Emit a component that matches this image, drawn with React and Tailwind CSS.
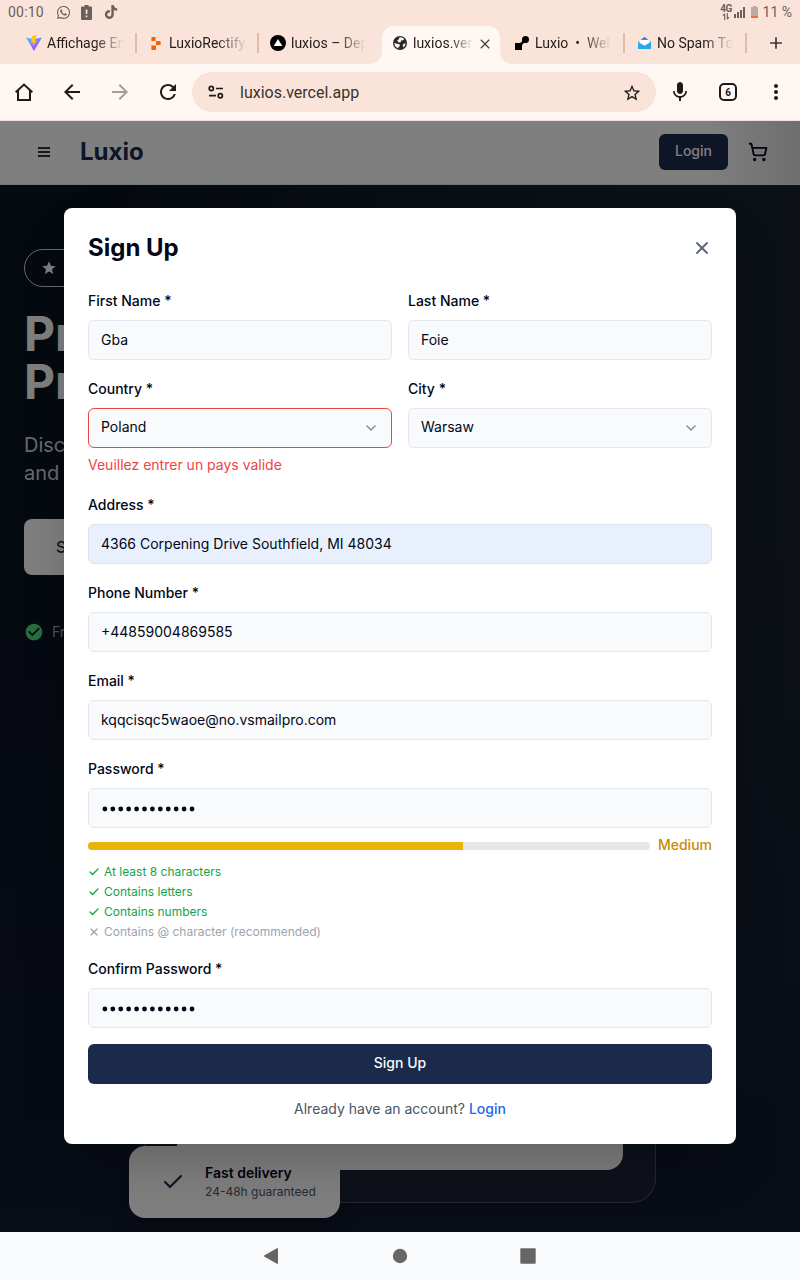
import { Check, ChevronDown, ShoppingCart, X } from "lucide-react";
import { MdAdd, MdArrowBack, MdArrowForward, MdClose, MdMic, MdMoreVert, MdRefresh, MdStar, MdStarBorder, MdCheckCircle } from "react-icons/md";
import { FaTiktok, FaWhatsapp } from "react-icons/fa";

function StatusBar() {
  return (
    <div className="flex h-6 items-center justify-between pl-2 pr-2 text-[14px] text-[#6b605b]">
      <div className="flex items-center">
        <span className="w-[48px] tracking-[0.2px]">00:10</span>
        <FaWhatsapp className="size-[15px]" />
        <svg className="ml-[10px] h-[15px] w-[11px]" viewBox="0 0 11 15" fill="currentColor" fillRule="evenodd">
          <path d="M3.500 0h4v1.500H10q1 0 1 1V14q0 1-1 1H1q-1 0-1-1V2.500q0-1 1-1h2.500zM4.700 4.500v4.500h1.700V4.500zM4.700 10.500v1.700h1.700v-1.700z" />
        </svg>
        <FaTiktok className="ml-[12px] size-[14px]" />
      </div>
      <div className="flex items-center">
        <div className="flex w-[13px] flex-col items-center text-[10px] font-bold leading-[9px]">
          <span className="tracking-[-0.4px]">4G</span>
          <svg className="h-[7px] w-[8px]" viewBox="0 0 8 8" fill="none" stroke="currentColor" strokeWidth="1.300">
            <path d="M2.500 8V1M.5 3l2-2M5.500 0v7M7.500 5l-2 2" />
          </svg>
        </div>
        <svg className="ml-px h-[11px] w-[11px]" viewBox="0 0 11 11" fill="currentColor">
          <path d="M0 7h2v4H0zM3 5h2v6H3zM6 3h2v8H6zM9 0h2v11H9z" />
        </svg>
        <svg className="ml-[6px] h-[13px] w-[7px]" viewBox="0 0 7 13">
          <path fill="#bfaaa1" d="M2 0h3v1h2v9H0V1h2z" />
          <path fill="#f26b4e" d="M0 10h7v2H0z" />
        </svg>
        <span className="ml-[5px]">11 %</span>
      </div>
    </div>
  );
}

function ViteIcon() {
  return (
    <svg viewBox="0 0 16 16" className="size-4">
      <defs>
        <linearGradient id="vite" x1="0" y1="0" x2="0.7" y2="1">
          <stop stopColor="#41d1ff" />
          <stop offset="1" stopColor="#bd34fe" />
        </linearGradient>
      </defs>
      <path fill="url(#vite)" d="M0 2.500 8 16 16 2.500 8 4z" />
      <path fill="#ffc61a" d="M11 0 6 1.200 5.400 8l2 -.4L7 11l4-5.500-2.200.3z" />
    </svg>
  );
}

function GlobeIcon() {
  return (
    <svg viewBox="0 0 14 14" className="size-[14px]">
      <circle cx="7" cy="7" r="7" fill="#28292b" />
      <path fill="#fff7f4" d="M6.500 1.300q3-.4 4.800 1.600L9.800 4.400 8.200 4.200 7.600 6.200 5.600 6.400 4.200 4.600 5.900 3.300zM1.400 6.800 3.600 7.800 6.600 8.200 6.800 10.200 5.400 10.900 5.600 12.500Q1.300 11.200 1.400 6.800M12.600 7.600q-.4 2.400-2.200 3.800L9.700 9l1.300-1.500z" />
    </svg>
  );
}

function Tab({ icon, title, className, textClass }) {
  return (
    <div className={"flex h-[35px] items-center " + className}>
      <span className="mb-px flex w-[16px] shrink-0 justify-center">{icon}</span>
      <span className={"ml-[5px] overflow-hidden whitespace-pre text-[14px] text-[#221b18] [mask-image:linear-gradient(to_right,black_62%,transparent)] " + textClass}>{title}</span>
    </div>
  );
}

function Separator() {
  return <div className="mt-[7px] h-[20px] w-[2px] shrink-0 bg-[#dfbba9]" />;
}

function TabStrip() {
  return (
    <div className="flex h-10 pt-[2px]">
      <Tab className="w-[135px] pl-[26px]" textClass="w-[77px]" icon={<ViteIcon />} title="Affichage Entreprise" />
      <Separator />
      <Tab
        className="w-[120px] pl-[11px]"
        textClass="w-[78px]"
        title="LuxioRectify"
        icon={
          <svg viewBox="0 0 10 14" className="h-[13px] w-[10px]" fill="#f26207">
            <path d="M1 0h3.500v4.300H0V1q0-1 1-1M5 4.300h4q1 0 1 1v2.400q0 1-1 1H5zM0 9.200h5V13q0 1-1 1H1q-1 0-1-1z" />
          </svg>
        }
      />
      <Separator />
      <Tab
        className="w-[123px] pl-[11px]"
        textClass="w-[75px]"
        title="luxios – Deploy"
        icon={
          <svg viewBox="0 0 16 16" className="size-4">
            <circle cx="8" cy="8" r="8" />
            <path fill="#fff" d="m8 4 4.300 7H3.700z" />
          </svg>
        }
      />
      <div className="relative flex w-[118px] rounded-t-xl bg-[#fff7f4]">
        <div className="absolute bottom-0 -left-3 size-3 bg-[radial-gradient(circle_at_0_0,#fae4d9_11.5px,#fff7f4_12px)]" />
        <div className="absolute bottom-0 -right-3 size-3 bg-[radial-gradient(circle_at_100%_0,#fae4d9_11.5px,#fff7f4_12px)]" />
        <Tab className="pl-[10px]" textClass="w-[60px]" title="luxios.vercel.app" icon={<GlobeIcon />} />
        <div className="flex h-[35px] items-center pl-[4px]">
          <MdClose className="size-4 text-[#4c4441]" />
        </div>
      </div>
      <Tab
        className="w-[123px] pl-[14px]"
        textClass="w-[76px]"
        title="Luxio  •  Website"
        icon={
          <svg viewBox="0 0 14 14" className="size-[14px]">
            <circle cx="10.5" cy="3.5" r="3.5" />
            <path d="M0 7h4q3 0 4-4l4 3q-5 1-5 4v4H0z" />
          </svg>
        }
      />
      <Separator />
      <Tab
        className="w-[120px] pl-[11px]"
        textClass="w-[76px]"
        title="No Spam Today"
        icon={
          <svg viewBox="0 0 14 14" className="size-[13px]">
            <path fill="#1675d2" d="m0 5 7-5 7 5z" />
            <path fill="#fff" d="M1.500 3h11v6h-11z" />
            <path fill="#28a8ea" d="m0 5 7 4.500L14 5v8H0z" />
          </svg>
        }
      />
      <Separator />
      <div className="flex h-[34px] flex-1 items-center justify-center pl-1">
        <MdAdd className="size-[20px] text-[#3d3532]" />
      </div>
    </div>
  );
}

function Toolbar() {
  return (
    <div className="flex h-[57px] items-center border-b border-[#f6e0d7] bg-[#fff7f4] text-[#201a17]">
      <div className="flex w-12 justify-center">
        <svg className="size-6" viewBox="0 0 24 24" fill="none" stroke="currentColor" strokeWidth="2">
          <path d="M3.700 12.300 12 4.500l8.300 7.800M6 10.500V20h12v-9.500" />
        </svg>
      </div>
      <div className="flex w-12 justify-center"><MdArrowBack className="size-6" /></div>
      <div className="flex w-12 justify-center"><MdArrowForward className="size-6 text-[#a39c99]" /></div>
      <div className="flex w-12 justify-center"><MdRefresh className="size-6" /></div>
      <div className="flex h-10 w-[464px] items-center rounded-full bg-[#fae4d9] px-3">
        <svg className="size-6" viewBox="0 0 24 24" fill="none" stroke="currentColor" strokeWidth="1.700">
          <circle cx="7.300" cy="8.500" r="2.100" />
          <circle cx="16.300" cy="15.700" r="2.100" />
          <path d="M12 8.500h7M5 15.700h7" />
        </svg>
        <span className="ml-3 flex-1 pt-[2px] text-[16px] text-[#3b322e]">luxios.vercel.app</span>
        <div className="flex w-6 justify-center pt-[2px]"><MdStarBorder className="size-5" /></div>
      </div>
      <div className="flex w-12 justify-center"><MdMic className="size-6" /></div>
      <div className="flex w-12 justify-center">
        <div className="flex size-[18px] items-center justify-center rounded-[5px] border-2 border-current text-[10px] font-bold">6</div>
      </div>
      <div className="flex w-12 justify-center"><MdMoreVert className="size-6" /></div>
    </div>
  );
}

function SiteHeader() {
  return (
    <header className="flex h-16 shrink-0 items-center border-b border-[#e2e8f0] bg-linear-to-r from-white from-88% to-[#dedede] px-8 pb-px">
      <svg className="ml-[6px] h-[10px] w-[12px] text-[#33353f]" viewBox="0 0 12 10" stroke="currentColor" strokeWidth="2">
        <path d="M0 1h12M0 5h12M0 9h12" />
      </svg>
      <span className="ml-[30px] flex-1 text-[24px] font-bold leading-8 text-[#1c2a4e]">Luxio</span>
      <div className="flex h-9 w-[69px] items-center justify-center rounded-md bg-[#1c2a4e] pb-[3px] text-[14px] font-medium text-white">Login</div>
      <ShoppingCart className="ml-5 size-5 text-[#020817]" strokeWidth={2.2} />
    </header>
  );
}

function Hero() {
  return (
    <section className="relative flex flex-1 flex-col overflow-hidden bg-linear-to-r from-[#0b1220] from-10% via-[#18212f] via-80% to-[#1a222e] px-6 pt-16 text-white">
      <div className="absolute inset-x-0 bottom-0 h-[700px] bg-linear-to-t from-[#10182c] to-transparent" />
      <div className="relative flex flex-1 flex-col">
        <div className="flex h-[38px] w-[200px] items-center rounded-full border border-white/80 pl-4">
          <MdStar className="size-4" />
        </div>
        <h1 className="mt-[23px] text-[48px] font-bold leading-[48px]">
          Pr
          <br />
          Pr
        </h1>
        <p className="mt-[25px] text-[20px] leading-7 text-[#d1d5db]">
          Disc
          <br />
          and
        </p>
        <div className="mt-8 flex h-14 w-[180px] items-center rounded-lg bg-white pl-8 text-[16px] font-medium text-[#1c2a4e]">S</div>
        <div className="mt-[47px] flex items-center text-[14px] leading-5 text-[#9ca3af]">
          <MdCheckCircle className="size-5 text-[#4ade80]" />
          <span className="ml-2">Fr</span>
        </div>
        <div className="absolute bottom-[29px] left-[120px] h-[400px] w-[512px] rounded-[24px] border border-white/20 bg-white/5 p-8">
          <div className="h-full rounded-2xl bg-white" />
        </div>
        <div className="absolute bottom-[14px] left-[105px] flex h-[72px] w-[211px] items-center rounded-2xl bg-white pl-8 shadow-xl">
          <Check className="size-6 text-[#1c2a4e]" strokeWidth={2.2} />
          <div className="ml-5">
            <div className="-mt-px mb-px text-[14px] font-semibold leading-5 text-[#020817]">Fast delivery</div>
            <div className="text-[12px] leading-4 text-[#4b5563]">24-48h guaranteed</div>
          </div>
        </div>
      </div>
    </section>
  );
}

function Field({ label, value, box = "border-[#e2e8f0] bg-[#f8fafc]", select, error, children }) {
  return (
    <div>
      <div className="flex h-6 items-center text-[14px] font-medium">{label}</div>
      <div className={"mt-2 flex h-10 items-center justify-between rounded-md border px-3 text-[14px] " + box}>
        <span className={select ? "pb-[3px]" : "pb-[2px]"}>{value}</span>
        {select && <ChevronDown className="size-4 text-[#8b8e94]" strokeWidth={2.4} />}
      </div>
      {error && <p className="mt-[7px] mb-px text-[14px] leading-5 text-[#ef4444]">{error}</p>}
      {children}
    </div>
  );
}

function Rule({ ok = true, children }) {
  const Icon = ok ? Check : X;
  return (
    <li className={"flex h-4 items-center text-[12px] leading-4 " + (ok ? "text-[#16a34a]" : "text-[#9ca3af]")}>
      <Icon className="mr-1 size-3" strokeWidth={2.6} />
      {children}
    </li>
  );
}

function Dots() {
  return (
    <svg className="mt-[3px] h-[6px] w-[96px]" viewBox="0 0 96 6" fill="#020817">
      {Array.from({ length: 12 }, (_, i) => (
        <circle key={i} cx={3.9 + i * 7.92} cy={3} r={2.4} />
      ))}
    </svg>
  );
}

function SignUpDialog() {
  return (
    <div className="absolute inset-0 flex items-start justify-center bg-black/50 pt-[87px]">
      <div className="h-[936px] w-[672px] rounded-lg bg-white p-6 text-[#020817] shadow-2xl">
        <div className="flex h-8 items-center justify-between">
          <h2 className="text-[24px] font-bold leading-8">Sign Up</h2>
          <X className="size-5 text-[#5b6779]" strokeWidth={2.3} />
        </div>
        <div className="mt-6 flex flex-col gap-4">
          <div className="grid grid-cols-2 gap-4">
            <Field label="First Name *" value="Gba" />
            <Field label="Last Name *" value="Foie" />
          </div>
          <div className="grid grid-cols-2 gap-4">
            <Field label="Country *" value="Poland" select box="border-[#ef4444] bg-[#f8fafc]" error="Veuillez entrer un pays valide" />
            <Field label="City *" value="Warsaw" select />
          </div>
          <Field label="Address *" value="4366 Corpening Drive Southfield, MI 48034" box="border-[#dbe3ef] bg-[#e8f0fe]" />
          <Field label="Phone Number *" value="+44859004869585" />
          <Field label="Email *" value="kqqcisqc5waoe@no.vsmailpro.com" />
          <Field label="Password *" value={<Dots />}>
            <div className="mt-2 flex h-5 items-center gap-2">
              <div className="h-2 flex-1 overflow-hidden rounded-full bg-[#e5e7eb]">
                <div className="h-full w-2/3 bg-[#eab308]" />
              </div>
              <span className="mb-[2px] text-[14px] font-medium leading-5 text-[#ca8a04]">Medium</span>
            </div>
            <ul className="mt-2 flex flex-col gap-1">
              <Rule>At least 8 characters</Rule>
              <Rule>Contains letters</Rule>
              <Rule>Contains numbers</Rule>
              <Rule ok={false}>Contains @ character (recommended)</Rule>
            </ul>
          </Field>
          <Field label="Confirm Password *" value={<Dots />} />
          <button className="h-10 rounded-md bg-[#1b294b] pb-[3px] text-[14px] font-medium text-[#f8fafc]">Sign Up</button>
          <p className="-mt-px text-center text-[14px] leading-5 text-[#4b5563]">
            Already have an account? <span className="font-medium text-[#2563eb]">Login</span>
          </p>
        </div>
      </div>
    </div>
  );
}

function NavigationBar() {
  return (
    <div className="flex h-12 items-center justify-center gap-[104px] bg-[#f9fafc]">
      <svg className="size-6" viewBox="0 0 24 24" fill="#666"><path d="M4.500 11.200 17 4.200q1-.5 1 .5v14.600q0 1-1 .5l-12.500-7q-.9-.8 0-1.600" /></svg>
      <svg className="size-6" viewBox="0 0 24 24" fill="#666"><circle cx="12" cy="12" r="7.200" /></svg>
      <svg className="size-6" viewBox="0 0 24 24" fill="#666"><rect x="4.300" y="4.300" width="15.400" height="15.400" rx="1" /></svg>
    </div>
  );
}

export default function App() {
  return (
    <div className="flex h-[1280px] w-[800px] flex-col overflow-hidden bg-[#fae4d9] font-[Roboto,sans-serif]">
      <StatusBar />
      <TabStrip />
      <Toolbar />
      <main className="relative flex h-[1111px] flex-col font-[Inter,sans-serif]">
        <SiteHeader />
        <Hero />
        <SignUpDialog />
      </main>
      <NavigationBar />
    </div>
  );
}
